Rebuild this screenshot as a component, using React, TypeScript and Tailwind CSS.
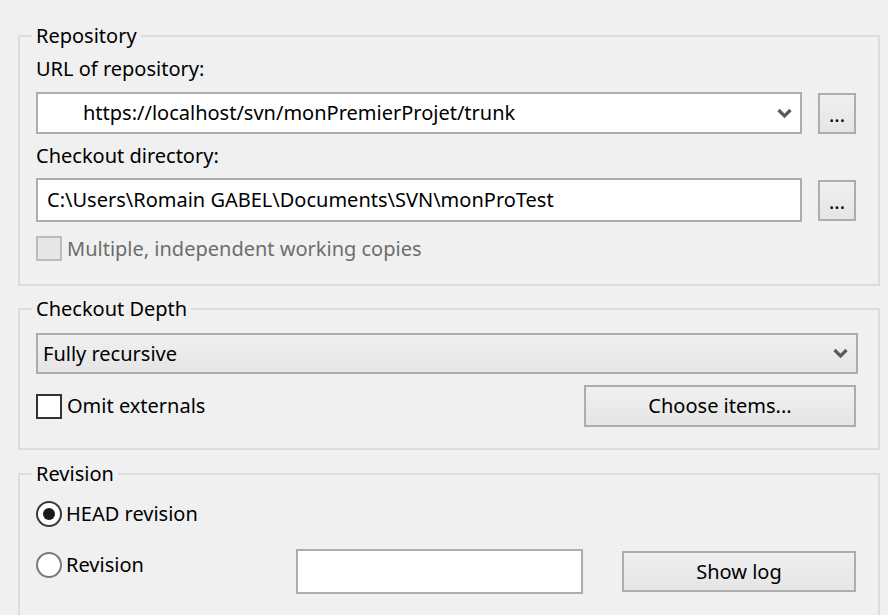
import React from 'react';

// Checkout dialog (TortoiseSVN style), drawn at 2x

const font = { fontFamily: '"Noto Sans", "Open Sans", sans-serif' };

const Chevron: React.FC = () => (
  <svg width="15" height="11" viewBox="0 0 15 11" className="shrink-0">
    <polyline points="1.5,2 7.5,8 13.5,2" fill="none" stroke="#5a5a5a" strokeWidth="3.2" />
  </svg>
);

const DotsButton: React.FC = () => (
  <button className="w-[38px] h-[41px] shrink-0 border-2 border-[#adadad] bg-gradient-to-b from-[#f0f0f0] to-[#e5e5e5] flex items-end justify-center pb-[7px] text-[20px] leading-none text-black">
    ...
  </button>
);

const Group: React.FC<{ title: string; className?: string; children: React.ReactNode }> = ({
  title,
  className = '',
  children,
}) => (
  <fieldset className={`w-[862px] min-w-0 border-2 border-[#dcdcdc] pl-4 ${className}`}>
    <legend className="-ml-1 px-1 text-[20px] leading-[28px] text-black">{title}</legend>
    {children}
  </fieldset>
);

export default function App() {
  return (
    <div className="w-[888px] h-[615px] overflow-hidden bg-[#f0f0f0] pl-[18px] pt-[22px] text-[20px] text-black" style={font}>
      <Group title="Repository" className="h-[264px] pr-[22px]">
        <div className="mt-[5px] leading-[28px]">URL of repository:</div>
        <div className="mt-[9px] flex items-center gap-4">
          <div className="flex h-[42px] w-[766px] items-center border-2 border-[#adadad] bg-white pl-[45px] pr-[8px]">
            <span className="flex-1 leading-none">https://localhost/svn/monPremierProjet/trunk</span>
            <Chevron />
          </div>
          <DotsButton />
        </div>
        <div className="mt-[8px] leading-[28px]">Checkout directory:</div>
        <div className="mt-[8px] flex items-center gap-4">
          <div className="flex h-[44px] w-[766px] items-center border-2 border-[#adadad] bg-white pl-[9px]">
            <span className="leading-none">C:\Users\Romain GABEL\Documents\SVN\monProTest</span>
          </div>
          <DotsButton />
        </div>
        <div className="mt-[14px] flex items-center gap-[5px]">
          <span className="h-[25px] w-[26px] border-2 border-[#bcbcbc] bg-[#e6e6e6]" />
          <span className="leading-none text-[#6d6d6d]">Multiple, independent working copies</span>
        </div>
      </Group>

      <Group title="Checkout Depth" className="mt-[9px] h-[155px] pr-[20px]">
        <div className="mt-[10px] flex h-[41px] w-[822px] items-center border-2 border-[#acacac] bg-gradient-to-b from-[#f0f0f0] to-[#e5e5e5] pl-[5px] pr-[8px]">
          <span className="flex-1 leading-none">Fully recursive</span>
          <Chevron />
        </div>
        <div className="mt-[11px] flex h-[42px] items-center pr-[2px]">
          <span className="h-[25px] w-[26px] border-2 border-[#333333] bg-white" />
          <span className="ml-[5px] flex-1 leading-none">Omit externals</span>
          <button className="h-[42px] w-[272px] border-2 border-[#adadad] bg-gradient-to-b from-[#f0f0f0] to-[#e5e5e5] leading-none text-black">
            Choose items...
          </button>
        </div>
      </Group>

      <Group title="Revision" className="mt-[10px] h-[200px] pr-[22px]">
        <div className="mt-[13px] flex items-center gap-[4px]">
          <span className="flex h-[26px] w-[26px] items-center justify-center rounded-full border-2 border-[#3a3a3a] bg-white">
            <span className="h-[12px] w-[12px] rounded-full bg-[#1a1a1a]" />
          </span>
          <span className="leading-none">HEAD revision</span>
        </div>
        <div className="mt-[22px] flex items-start">
          <div className="mt-[3px] flex w-[260px] items-center gap-[4px]">
            <span className="h-[26px] w-[26px] rounded-full border-2 border-[#7a7a7a] bg-white" />
            <span className="leading-none">Revision</span>
          </div>
          <div className="h-[45px] w-[287px] shrink-0 border-2 border-[#adadad] bg-white" />
          <button className="ml-[39px] mt-[2px] h-[41px] w-[234px] border-2 border-[#adadad] bg-gradient-to-b from-[#f0f0f0] to-[#e5e5e5] leading-none text-black">
            Show log
          </button>
        </div>
      </Group>
    </div>
  );
}
